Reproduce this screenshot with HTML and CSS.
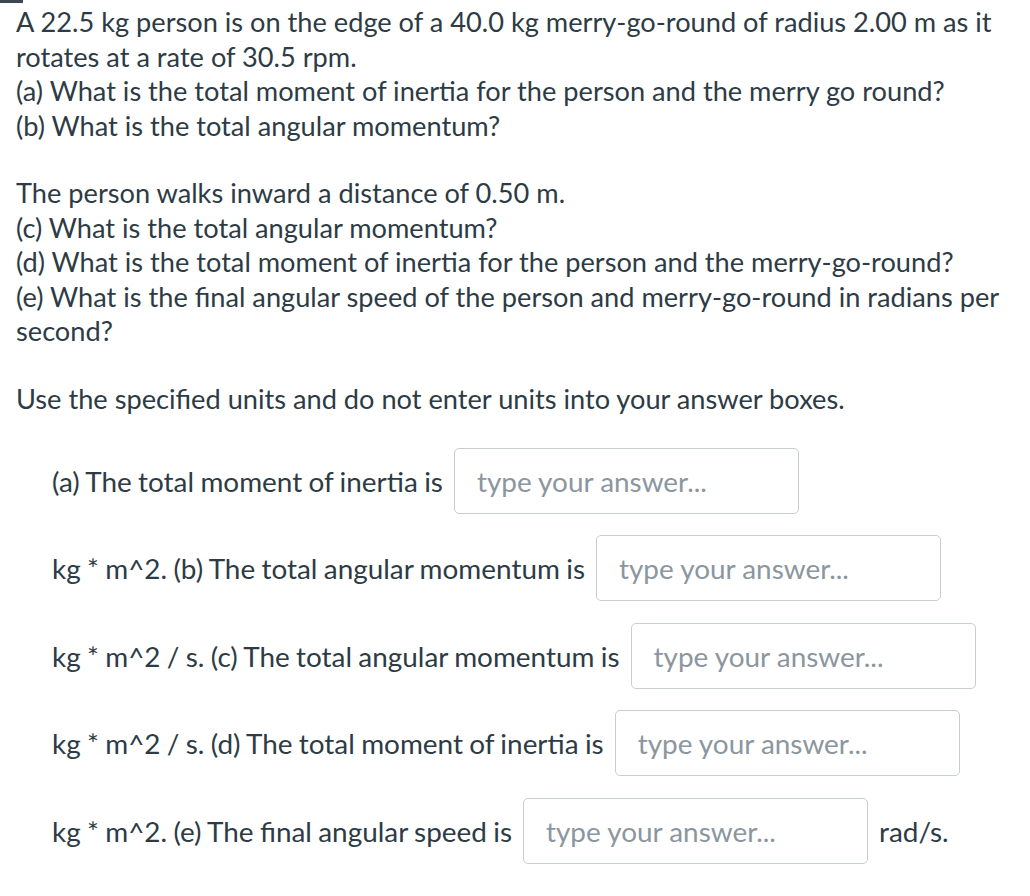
FILE: index.html
```html
<!DOCTYPE html>
<html>
<head>
<meta charset="utf-8">
<link rel="stylesheet" href="styles.css">
</head>
<body>
<div class="mark"></div>
<div class="question">
  <p class="para">A 22.5 kg person is on the edge of a 40.0 kg merry-go-round of radius 2.00 m as it rotates at a rate of 30.5 rpm.<br>(a) What is the total moment of inertia for the person and the merry go round?<br>(b) What is the total angular momentum?</p>
  <p class="para">The person walks inward a distance of 0.50 m.<br>(c) What is the total angular momentum?<br>(d) What is the total moment of inertia for the person and the merry-go-round?<br>(e) What is the final angular speed of the person and merry-go-round in radians per second?</p>
  <p class="para para-last">Use the specified units and do not enter units into your answer boxes.</p>
  <div class="answers">
    <div class="row"><span>(a) The total moment of inertia is</span><span class="box">type your answer...</span></div>
    <div class="row"><span>kg * m^2. (b) The total angular momentum is</span><span class="box">type your answer...</span></div>
    <div class="row"><span>kg * m^2 / s. (c) The total angular momentum is</span><span class="box">type your answer...</span></div>
    <div class="row"><span>kg * m^2 / s. (d) The total moment of inertia is</span><span class="box">type your answer...</span></div>
    <div class="row"><span>kg * m^2. (e) The final angular speed is</span><span class="box">type your answer...</span><span>rad/s.</span></div>
  </div>
</div>
</body>
</html>
```
FILE: styles.css
```css
html, body {
  margin: 0;
  padding: 0;
  background: #ffffff;
}
body {
  font-family: Lato, "Noto Sans", sans-serif;
  font-size: 27px;
  color: #2d3b45;
  position: relative;
}
.mark {
  position: absolute;
  left: 0;
  top: 0;
  width: 23px;
  height: 3px;
  background: #3b4852;
}
.question {
  padding: 5px 16px 0 16px;
}
.para {
  margin: 0 0 33px 0;
  line-height: 34.5px;
  font-size: 27.2px;
}
.para-last {
  margin-bottom: 21px;
}
.answers {
  padding-left: 36px;
  font-size: 27.9px;
  word-spacing: -0.8px;
}
.row {
  display: flex;
  align-items: center;
  height: 87.5px;
  white-space: nowrap;
}
.box {
  box-sizing: border-box;
  width: 345px;
  height: 66px;
  margin: 0 11px;
  border: 1px solid #c7cdd1;
  border-radius: 5px;
  padding-left: 22px;
  display: flex;
  align-items: center;
  color: #8b969e;
  background: #fff;
  word-spacing: normal;
}
```
